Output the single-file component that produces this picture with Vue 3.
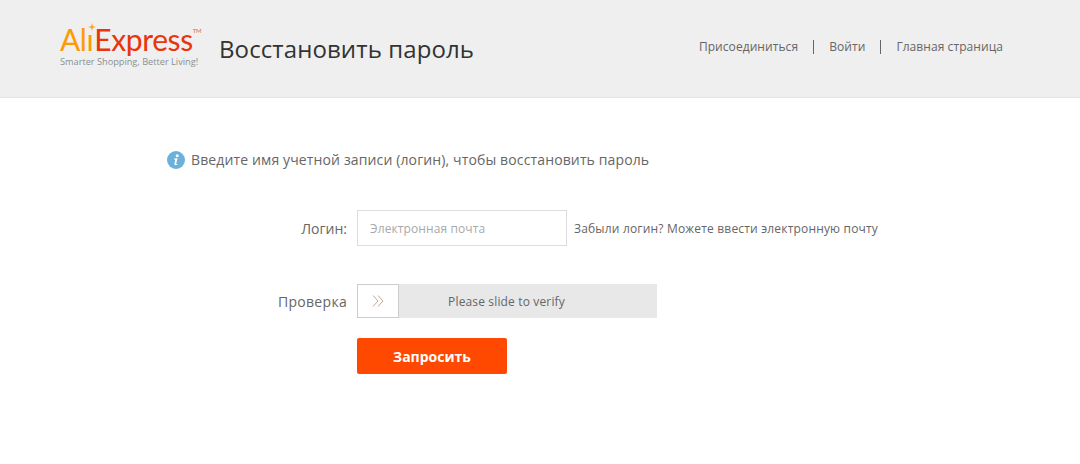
<template>
  <div class="page">
    <header class="header">
      <div class="logo">
        <div class="logo-main">
          <span class="ali">Al<span class="dotless">ı</span><svg class="spark" viewBox="0 0 8 8"><path d="M4 0 L4.8 3.2 L8 4 L4.8 4.8 L4 8 L3.2 4.8 L0 4 L3.2 3.2 Z" fill="#f90" /></svg></span><span class="express">Express</span><span class="tm">TM</span>
        </div>
        <div class="logo-sub">Smarter Shopping, Better Living!</div>
      </div>
      <h1 class="title">Восстановить пароль</h1>
      <nav class="nav">
        <a class="nav-link">Присоединиться</a>
        <a class="nav-link">Войти</a>
        <a class="nav-link">Главная страница</a>
      </nav>
    </header>

    <main class="content">
      <p class="notice">
        <svg class="info" viewBox="0 0 18 18">
          <circle cx="9" cy="9" r="9" fill="#6cb0dc" />
          <circle cx="10.2" cy="4.8" r="1.5" fill="#fff" />
          <path d="M7.2 7.6 L10.6 7.2 L9.2 12.6 Q9 13.5 10.4 12.8 L10.3 13.7 Q7.2 15 7.4 12.8 L8.3 8.8 L7.1 8.6 Z" fill="#fff" />
        </svg>
        Введите имя учетной записи (логин), чтобы восстановить пароль
      </p>

      <div class="row row-login">
        <label class="label label-login">Логин:</label>
        <input class="input" type="text" placeholder="Электронная почта" />
        <span class="hint">Забыли логин? Можете ввести электронную почту</span>
      </div>

      <div class="row row-verify">
        <label class="label">Проверка</label>
        <div class="slider">
          <div class="handle">
            <svg class="arrows" viewBox="0 0 12 12">
              <path d="M1 0.5 L6 6 L1 11.5" />
              <path d="M6 0.5 L11 6 L6 11.5" />
            </svg>
          </div>
          <span class="slider-text">Please slide to verify</span>
        </div>
      </div>

      <div class="row row-submit">
        <button class="submit">Запросить</button>
      </div>
    </main>
  </div>
</template>

<script setup>
</script>

<style>
html,
body {
  margin: 0;
  background: #fff;
}
</style>

<style scoped>
.page {
  height: 464px;
  overflow: hidden;
  font-family: "Open Sans", "Noto Sans", sans-serif;
  color: #666;
}

.header {
  display: flex;
  align-items: center;
  height: 97px;
  padding: 0 77px 0 60px;
  background: #efefef;
  border-bottom: 1px solid #e4e4e4;
}

.logo {
  width: 159px;
  flex: none;
  margin-top: -7px;
}

.logo-main {
  display: flex;
  height: 32px;
  font-family: Lato, "Open Sans", sans-serif;
  font-size: 30px;
  font-weight: 400;
  line-height: 32px;
  letter-spacing: -0.4px;
}

.ali {
  position: relative;
  padding-right: 1px;
  color: #ff9a00;
}

.spark {
  position: absolute;
  top: 0;
  right: -2px;
  width: 8px;
  height: 8px;
}

.express {
  color: #e8350a;
}

.tm {
  margin: 4px 0 0 0;
  font-size: 6px;
  line-height: 8px;
  color: #e8654a;
}

.logo-sub {
  margin-top: 1px;
  font-size: 9.2px;
  line-height: 12px;
  color: #8a8f8f;
  white-space: nowrap;
}

.title {
  margin: 0;
  font-size: 24px;
  font-weight: 400;
  letter-spacing: 0.1px;
  color: #333;
  white-space: nowrap;
}

.nav {
  display: flex;
  margin-left: auto;
  margin-top: -4px;
}

.nav-link {
  padding: 0 15px;
  font-size: 12px;
  line-height: 14px;
  letter-spacing: 0.07px;
  color: #666;
  border-left: 1px solid #666;
}

.nav-link:first-child {
  border-left: none;
}

.nav-link:last-child {
  padding-right: 0;
}

.content {
  padding-left: 167px;
}

.notice {
  display: flex;
  align-items: center;
  gap: 6px;
  margin: 52px 0 0;
  font-size: 14px;
  line-height: 20px;
  letter-spacing: 0.13px;
}

.info {
  width: 18px;
  height: 18px;
  flex: none;
}

.row {
  display: flex;
  align-items: center;
}

.row-login {
  margin-top: 40px;
}

.row-verify {
  margin-top: 38px;
}

.row-submit {
  margin-top: 20px;
  padding-left: 190px;
}

.label {
  width: 180px;
  margin-right: 10px;
  font-size: 14px;
  letter-spacing: 0.3px;
  text-align: right;
}

.label-login {
  letter-spacing: 0;
}

.input {
  box-sizing: border-box;
  width: 210px;
  height: 36px;
  padding: 0 12px;
  font-family: inherit;
  font-size: 12px;
  letter-spacing: 0.1px;
  color: #333;
  background: #fff;
  border: 1px solid #ddd;
  border-radius: 0;
  outline: none;
}

.input::placeholder {
  color: #a9a9a9;
  opacity: 1;
}

.hint {
  margin-left: 7px;
  font-size: 12px;
  letter-spacing: 0.18px;
  color: #666;
  white-space: nowrap;
}

.slider {
  display: flex;
  align-items: center;
  width: 300px;
  height: 34px;
  background: #e8e8e8;
}

.handle {
  box-sizing: border-box;
  display: flex;
  align-items: center;
  justify-content: center;
  width: 42px;
  height: 34px;
  flex: none;
  background: #fff;
  border: 1px solid #ccc;
}

.arrows {
  width: 12px;
  height: 12px;
  fill: none;
  stroke: #c9a595;
  stroke-width: 1;
}

.slider-text {
  flex: 1;
  padding-right: 43px;
  font-size: 12px;
  letter-spacing: 0.15px;
  text-align: center;
  color: #666;
}

.submit {
  width: 150px;
  height: 36px;
  padding: 0;
  font-family: inherit;
  font-size: 14px;
  font-weight: 700;
  color: #fff;
  background: #ff4800;
  border: none;
  border-radius: 2px;
}
</style>
